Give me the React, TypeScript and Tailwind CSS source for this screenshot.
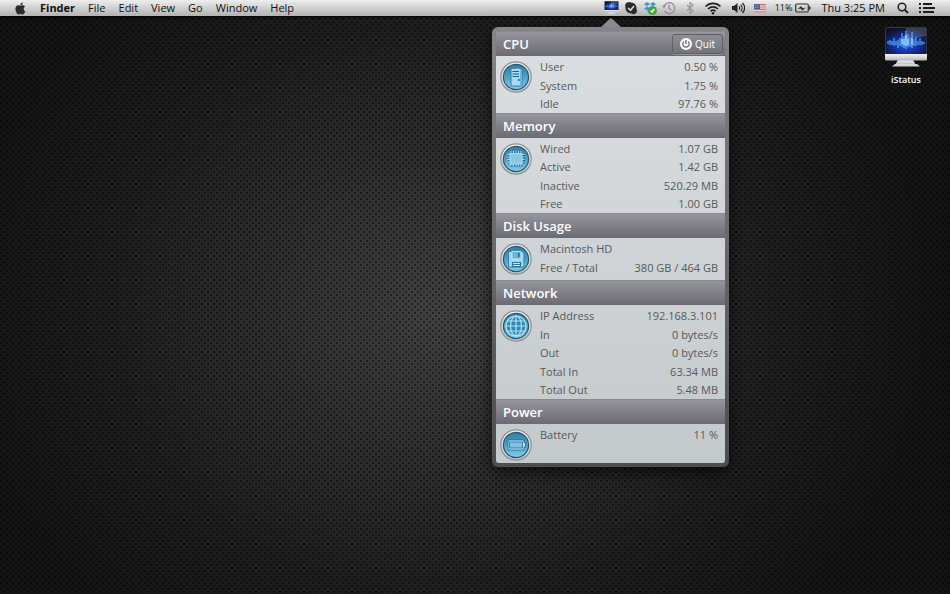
import type { ReactNode } from "react";

type Row = { label: string; value?: string };

type Section = {
  title: string;
  icon: ReactNode;
  rows: Row[];
  // height and spacing of the rows block
  body: string;
};

const menus = ["File", "Edit", "View", "Go", "Window", "Help"];

const sections: Section[] = [
  {
    title: "CPU",
    icon: <ServerGlyph />,
    body: "min-h-[57px] justify-between",
    rows: [
      { label: "User", value: "0.50 %" },
      { label: "System", value: "1.75 %" },
      { label: "Idle", value: "97.76 %" },
    ],
  },
  {
    title: "Memory",
    icon: <ChipGlyph />,
    body: "min-h-[75px] justify-between",
    rows: [
      { label: "Wired", value: "1.07 GB" },
      { label: "Active", value: "1.42 GB" },
      { label: "Inactive", value: "520.29 MB" },
      { label: "Free", value: "1.00 GB" },
    ],
  },
  {
    title: "Disk Usage",
    icon: <FloppyGlyph />,
    body: "min-h-[42px] gap-px",
    rows: [
      { label: "Macintosh HD" },
      { label: "Free / Total", value: "380 GB / 464 GB" },
    ],
  },
  {
    title: "Network",
    icon: <GlobeGlyph />,
    body: "min-h-[94px] justify-between",
    rows: [
      { label: "IP Address", value: "192.168.3.101" },
      { label: "In", value: "0 bytes/s" },
      { label: "Out", value: "0 bytes/s" },
      { label: "Total In", value: "63.34 MB" },
      { label: "Total Out", value: "5.48 MB" },
    ],
  },
  {
    title: "Power",
    icon: <BatteryGlyph />,
    body: "min-h-[39px]",
    rows: [{ label: "Battery", value: "11 %" }],
  },
];

function ServerGlyph() {
  return (
    <g>
      <path d="M11 7.5L19 7l3 1.5v16.5H11z" fill="#a5daf0" stroke="#2a7096" strokeWidth="0.8" />
      <path d="M20 8l2 1v16h-2z" fill="#6bb6d8" />
      <path d="M12.5 10.5h6.5M12.5 13h6.5M12.5 15.5h6.5" stroke="#17628b" strokeWidth="1.1" />
      <circle cx="18.8" cy="19" r="0.9" fill="#124b6c" />
    </g>
  );
}

function ChipGlyph() {
  return (
    <g>
      <path
        d="M11.5 8.5v15M14 8.5v15M16.5 8.5v15M19 8.5v15M21.5 8.5v15M8 12h17M8 14.5h17M8 17h17M8 19.5h17"
        stroke="#1b5878"
        strokeWidth="1.6"
      />
      <path
        d="M11 8v15M13.5 8v15M16 8v15M18.5 8v15M21 8v15M7.5 11.5h17M7.5 14h17M7.5 16.5h17M7.5 19h17"
        stroke="#a9dcf1"
        strokeWidth="1"
      />
      <rect x="10" y="10.5" width="12" height="10.5" fill="#88c8e5" stroke="#b9e5f6" strokeWidth="0.8" />
    </g>
  );
}

function FloppyGlyph() {
  return (
    <g>
      <path d="M8.5 8.5H22l2 2V24H8.5z" fill="#9fd6ee" stroke="#2a7096" strokeWidth="0.8" />
      <path d="M12 8.5h9V16h-9z" fill="#6bb4d6" stroke="#e0f5fd" strokeWidth="0.7" />
      <path d="M18 10h1.5v4H18z" fill="#1d668c" />
      <path d="M12 19h9v5h-9z" fill="#2d7195" />
      <path d="M13 20.5h7M13 22.5h7" stroke="#c3e8f6" strokeWidth="1" />
    </g>
  );
}

function GlobeGlyph() {
  return (
    <g fill="none" stroke="#b6e5f8" strokeWidth="1.2">
      <circle cx="16" cy="16" r="10" fill="#2f86b0" />
      <ellipse cx="16" cy="16" rx="5.5" ry="10" />
      <path d="M16 6v20M6 16h20M7.5 11h17M7.5 21h17" />
    </g>
  );
}

function BatteryGlyph() {
  return (
    <g>
      <path d="M8 11h16v2.5h1.5V18H24v3H8z" fill="#bce5f6" stroke="#1d668c" strokeWidth="0.8" />
      <rect x="9.5" y="13" width="13" height="6" fill="#7fc2e2" stroke="#2c7ba3" strokeWidth="0.9" />
    </g>
  );
}

function Badge({ children }: { children: ReactNode }) {
  return (
    <svg viewBox="0 0 32 32" className="size-8 shrink-0" aria-hidden="true">
      <defs>
        <linearGradient id="badge-ring" x1="0" y1="0" x2="0" y2="1">
          <stop offset="0" stopColor="#eef0f1" />
          <stop offset="1" stopColor="#c3c7ca" />
        </linearGradient>
        <linearGradient id="badge-face" x1="0" y1="0" x2="0" y2="1">
          <stop offset="0" stopColor="#357fa6" />
          <stop offset="0.45" stopColor="#4a9cc3" />
          <stop offset="1" stopColor="#83cdec" />
        </linearGradient>
      </defs>
      <circle cx="16" cy="16" r="15.2" fill="url(#badge-ring)" stroke="#8d9094" strokeWidth="1.2" />
      <circle cx="16" cy="16" r="12.6" fill="url(#badge-face)" stroke="#2a566e" strokeWidth="1.2" />
      {children}
    </svg>
  );
}

function AppleLogo() {
  return (
    <svg viewBox="0 0 24 24" className="size-[15px]" fill="#2b2b2b" aria-hidden="true">
      <path d="M17.1 12.6c0-2.5 2-3.7 2.1-3.8-1.2-1.7-3-1.9-3.6-2-1.5-.2-3 .9-3.7.9-.8 0-2-.9-3.2-.9-1.7 0-3.2 1-4.1 2.4-1.7 3-.4 7.5 1.3 9.9.8 1.2 1.8 2.5 3.1 2.5 1.2-.1 1.7-.8 3.2-.8s1.9.8 3.2.8 2.2-1.2 3-2.4c.9-1.4 1.3-2.7 1.3-2.8 0 0-2.6-1-2.6-3.8zM14.7 5.3c.7-.8 1.1-1.9 1-3.1-1 .1-2.1.7-2.8 1.5-.6.7-1.2 1.9-1 3 1.1.1 2.2-.5 2.8-1.4z" />
    </svg>
  );
}

function IStatusIcon({ className }: { className: string }) {
  return (
    <svg viewBox="0 0 44 42" className={className} aria-hidden="true">
      <defs>
        <radialGradient id="screen" cx="0.5" cy="0.65" r="0.65">
          <stop offset="0" stopColor="#1e55e8" />
          <stop offset="0.55" stopColor="#14288a" />
          <stop offset="1" stopColor="#0c1226" />
        </radialGradient>
        <linearGradient id="metal" x1="0" y1="0" x2="0" y2="1">
          <stop offset="0" stopColor="#f6f6f6" />
          <stop offset="1" stopColor="#b3b5b8" />
        </linearGradient>
      </defs>
      <path d="M14 33h15l3 5H11z" fill="url(#metal)" />
      <path d="M11 37h22l3 2.5H8z" fill="#d4d6d8" />
      <rect x="1.5" y="0.5" width="41" height="27" rx="1.5" fill="url(#screen)" stroke="#303645" />
      <path d="M22 1h20v8L20 13z" fill="#fff" opacity="0.18" />
      <path
        d="M4 14v3M6 13v5M8 14v4M10 11v8M12 14v4M14 13v8M16 11v8M18 6v14M20 9v12M22 4v18M24 7v13M26 11v9M28 5v16M30 12v7M32 10v9M34 14v4M36 11v7M38 14v4M40 15v2"
        stroke="#58b6ff"
        strokeWidth="1.1"
      />
      <path d="M20 12v6M22 8v11M24 12v6M28 11v7M18 12v5" stroke="#d8f1ff" strokeWidth="1" />
      <path d="M1 27h42v5q0 1.500-1.500 1.500h-39Q1 33.500 1 32z" fill="url(#metal)" />
    </svg>
  );
}

function SkypeIcon() {
  return (
    <svg viewBox="0 0 14 14" className="size-[14px]" aria-hidden="true">
      <path
        d="M4 1.200a3.300 3.300 0 0 1 3 .2 5.600 5.600 0 0 1 5.400 6.700 3.300 3.300 0 0 1-4.700 4.400A5.600 5.600 0 0 1 1.500 6 3.300 3.300 0 0 1 4 1.200z"
        fill="#2a2a2a"
      />
      <path d="M4.2 7l2.3 2.3L10 5.1" fill="none" stroke="#ddd" strokeWidth="1.6" />
    </svg>
  );
}

function DropboxIcon() {
  return (
    <svg viewBox="0 0 14 14" className="size-[14px]" aria-hidden="true">
      <path
        d="M4 1l3 2-3 2.200L1 3.200zM10 1l3 2.200-3 2L7 3zM4 5.400l3 2.200-3 2-3-2.200zM10 5.400l3 2-3 2.200-3-2zM4 10.400l3-2 3 2-3 2z"
        fill="#3a97d8"
      />
      <circle cx="9.5" cy="9.5" r="4" fill="#43ae3a" stroke="#2b8a27" strokeWidth="0.6" />
      <path d="M7.6 9.6L9 11l2.4-3" fill="none" stroke="#fff" strokeWidth="1.3" />
    </svg>
  );
}

function TimeMachineIcon() {
  return (
    <svg viewBox="0 0 14 14" className="size-[14px]" fill="none" stroke="#8b8b8b" strokeWidth="1.2" aria-hidden="true">
      <path d="M2 5.500A5.500 5.500 0 1 1 2.500 10M7 3.500V7.500l2.500 1.500" />
      <path d="M0 4.500h4L2 7.500z" fill="#8b8b8b" stroke="none" />
    </svg>
  );
}

function BluetoothIcon() {
  return (
    <svg viewBox="0 0 10 14" className="h-[14px] w-[10px]" fill="none" stroke="#999" strokeWidth="1.2" aria-hidden="true">
      <path d="M2 4l6 6-3 2.500v-11L8 4l-6 6" />
    </svg>
  );
}

function WifiIcon() {
  return (
    <svg viewBox="0 0 18 14" className="h-[14px] w-[18px]" fill="none" stroke="#222" strokeWidth="1.6" aria-hidden="true">
      <path d="M1.500 5.500a10.500 10.500 0 0 1 15 0M4 8a7 7 0 0 1 10 0M6.500 10.300a3.600 3.600 0 0 1 5 0" />
      <circle cx="9" cy="12.2" r="1.2" fill="#222" stroke="none" />
    </svg>
  );
}

function VolumeIcon() {
  return (
    <svg viewBox="0 0 14 14" className="size-[14px]" aria-hidden="true">
      <path d="M1 5h2l3.500-3v10L3 9H1z" fill="#222" />
      <path
        d="M8 5.200a2.500 2.500 0 0 1 0 3.600M9.800 3.600a5 5 0 0 1 0 6.800M11.500 2a7 7 0 0 1 0 10"
        fill="none"
        stroke="#222"
        strokeWidth="1.2"
      />
    </svg>
  );
}

function FlagIcon() {
  return (
    <svg viewBox="0 0 12 9" className="h-[9px] w-[12px]" aria-hidden="true">
      <rect width="12" height="9" fill="#efdcdc" />
      <path d="M0 .6h12M0 3h12M0 5.400h12M0 7.800h12" stroke="#d1696c" strokeWidth="1.2" />
      <rect width="6" height="5" fill="#4f6296" />
      <path d="M1 1.500h4M1 3.500h4" stroke="#c5cde2" strokeWidth="0.6" strokeDasharray="0.8 0.6" />
    </svg>
  );
}

function BatteryIcon() {
  return (
    <svg viewBox="0 0 16 10" className="h-[10px] w-4" aria-hidden="true">
      <rect x="0.7" y="1" width="12.6" height="8" rx="1.2" fill="none" stroke="#333" strokeWidth="1.2" />
      <path d="M14 3.500h1.500v3H14z" fill="#333" />
      <path d="M2.500 6L6 3.200l2 2.300 3-1.300-3.500 3.300-2-2z" fill="#222" />
    </svg>
  );
}

function MenuBar() {
  return (
    <header className="flex h-4 items-center justify-between bg-linear-to-b from-[#eeeeee] to-[#b2b2b2] text-[11px] leading-4 text-[#111] shadow-[0_1px_3px_#000]">
      <nav className="flex items-center pl-[13px]">
        <button type="button" aria-label="Apple menu" className="mr-3">
          <AppleLogo />
        </button>
        <button type="button" className="mr-[13px] font-bold">
          Finder
        </button>
        <div className="flex gap-[13px]">
          {menus.map((menu) => (
            <button key={menu} type="button">
              {menu}
            </button>
          ))}
        </div>
      </nav>
      <div className="flex items-center pr-[15px]">
        <button type="button" aria-label="iStatus" className="mr-[5px]">
          <IStatusIcon className="h-[14px] w-[15px]" />
        </button>
        <div className="mr-[9px] flex items-center gap-[5px]">
          <SkypeIcon />
          <DropboxIcon />
          <TimeMachineIcon />
        </div>
        <div className="flex items-center gap-[9px]">
          <BluetoothIcon />
          <WifiIcon />
          <VolumeIcon />
          <FlagIcon />
        </div>
        <span className="ml-[9px] text-[9px]">11%</span>
        <span className="ml-[3px]">
          <BatteryIcon />
        </span>
        <time className="ml-[10px]">Thu 3:25 PM</time>
        <button type="button" aria-label="Search" className="ml-[12px]">
          <svg viewBox="0 0 12 12" className="size-3" fill="none" stroke="#222" strokeWidth="1.5" aria-hidden="true">
            <circle cx="5" cy="5" r="3.8" />
            <path d="M7.600 7.600L11 11" strokeWidth="2" />
          </svg>
        </button>
        <button type="button" aria-label="Notifications" className="ml-[10px]">
          <svg viewBox="0 0 16 12" className="h-3 w-4" stroke="#1c1c1c" strokeWidth="2" aria-hidden="true">
            <path d="M0 2h2M4 2h9M0 6h2M4 6h12M0 10h2M4 10h11" />
          </svg>
        </button>
      </div>
    </header>
  );
}

function StatusSection({ section, first }: { section: Section; first: boolean }) {
  return (
    <section>
      <div className="flex h-[25px] items-center justify-between border-t border-[#8a8990] bg-linear-to-b from-[#97959d] to-[#6b6972] pr-[2px] pl-[7px]">
        <h2 className="text-[13px] leading-5 font-semibold text-white">{section.title}</h2>
        {first && (
          <button
            type="button"
            className="flex h-5 items-center gap-[3px] rounded-[3px] border border-[#605f66] bg-linear-to-b from-[#8f8e95] to-[#75747c] px-[7px] text-[10px] text-white shadow-[0_1px_0_#96959b]"
          >
            <svg viewBox="0 0 12 12" className="size-3" aria-hidden="true">
              <circle cx="6" cy="6" r="6" fill="#fff" />
              <path d="M4 3.500a3.200 3.200 0 1 0 4 0M6 2v4" fill="none" stroke="#67666e" strokeWidth="1.3" />
            </svg>
            Quit
          </button>
        )}
      </div>
      <div className="flex gap-2 pr-[7px] pl-1">
        <div className="pt-[5px]">
          <Badge>{section.icon}</Badge>
        </div>
        <dl className={`flex flex-1 flex-col pt-[2px] text-[11px] leading-[18px] text-[#58595c] ${section.body}`}>
          {section.rows.map((row) => (
            <div key={row.label} className="flex justify-between">
              <dt>{row.label}</dt>
              <dd>{row.value}</dd>
            </div>
          ))}
        </dl>
      </div>
    </section>
  );
}

function StatusPanel() {
  return (
    <aside className="absolute top-[18px] right-[221px] w-[237px]">
      <svg viewBox="0 0 20 9" className="mx-auto block h-[9px] w-5" aria-hidden="true">
        <path d="M0 9L9 .8q1-1 2 0L20 9z" fill="#8a8990" />
      </svg>
      <div className="rounded-[6px] bg-linear-to-b from-[#85848b] via-[#67676d] to-[#4c4d52] p-1 shadow-[0_5px_16px_#000000b0]">
        <div className="overflow-hidden rounded-b-[3px] bg-linear-to-b from-[#dbdfe1] to-[#c4c9cb]">
          {sections.map((section, index) => (
            <StatusSection key={section.title} section={section} first={index === 0} />
          ))}
        </div>
      </div>
    </aside>
  );
}

export default function App() {
  return (
    <div className="relative min-h-screen bg-[#131313] bg-[radial-gradient(circle_at_1px_1px,#00000073_1px,transparent_1px),radial-gradient(circle_at_1px_1px,#00000073_1px,transparent_1px),radial-gradient(ellipse_52%_72%_at_47%_52%,#414141,#323232_28%,#1f1f1f_65%,#131313)] bg-[size:6px_6px,6px_6px,100%_100%] bg-[position:0_0,3px_3px,0_0] font-['Open_Sans','Noto_Sans',sans-serif]">
      <MenuBar />
      <main className="flex justify-end pt-[11px] pr-[22px]">
        <button type="button" className="flex flex-col items-center">
          <IStatusIcon className="h-[42px] w-[44px]" />
          <span className="mt-1 text-[9px] leading-[14px] font-semibold text-white">iStatus</span>
        </button>
      </main>
      <StatusPanel />
    </div>
  );
}
